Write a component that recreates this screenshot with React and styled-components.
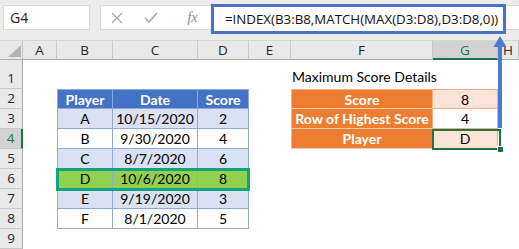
import React from "react";
import styled, { createGlobalStyle, css } from "styled-components";

const Global = createGlobalStyle`
  html, body { margin: 0; padding: 0; background: #fff; }
  body { width: 519px; height: 249px; overflow: hidden; }
  * { box-sizing: border-box; }
`;

const FONT = `"Lato", "Open Sans", "Liberation Sans", sans-serif`;

const Root = styled.div`
  position: relative;
  width: 519px;
  height: 249px;
  overflow: hidden;
  font-family: ${FONT};
`;

const Toolbar = styled.div`
  height: 40px;
  background: #ececec;
  display: flex;
  align-items: flex-start;
  padding: 5px 0 0 3px;
`;

const NameBox = styled.div`
  width: 87px;
  height: 25px;
  background: #fff;
  border: 1px solid #d6d6d6;
  font-family: "Open Sans", "Liberation Sans", sans-serif;
  font-size: 14px;
  color: #222;
  display: flex;
  align-items: center;
  padding-left: 6px;
`;

const FuncBox = styled.div`
  margin-left: 10px;
  width: 108px;
  height: 25px;
  background: #fff;
  border: 1px solid #d6d6d6;
  border-right: none;
  display: flex;
  align-items: center;
  justify-content: space-around;
  color: #a8a8a8;
`;

const Fx = styled.span`
  font-family: "Liberation Serif", serif;
  font-style: italic;
  font-size: 14px;
  color: #888;
  margin-left: 8px;
`;

const FormulaWrap = styled.div`
  flex: 1;
  height: 25px;
  background: #fff;
  border-top: 1px solid #d6d6d6;
  border-bottom: 1px solid #d6d6d6;
  position: relative;
`;

const FormulaBox = styled.div`
  position: absolute;
  left: 3px;
  top: -2px;
  width: 295px;
  height: 30px;
  border: 3px solid #4874c6;
  background: #fff;
  font-family: "Open Sans", "Liberation Sans", sans-serif;
  font-size: 13.3px;
  color: #111;
  display: flex;
  align-items: center;
  padding-left: 11px;
  white-space: nowrap;
`;

const Sheet = styled.div`
  position: relative;
  display: grid;
  grid-template-columns: 23px 34px 56px 85px 51px 42px 142px 65px 21px;
  grid-template-rows: 20px 29px repeat(8, 20px);
  background: #fff;
`;

const Corner = styled.div`
  background: #e9e9e9;
  border-right: 1px solid #c4c4c4;
  border-bottom: 1px solid #ababab;
  border-top: 1px solid #d6d6d6;
  position: relative;
  &::after {
    content: "";
    position: absolute;
    right: 1px;
    bottom: 2px;
    width: 0;
    height: 0;
    border-left: 13px solid transparent;
    border-bottom: 12px solid #b3b3b3;
  }
`;

const ColHead = styled.div`
  background: ${(p) => (p.$sel ? "#d2d2d2" : "#e9e9e9")};
  border-top: 1px solid #d6d6d6;
  border-right: 1px solid #c8c8c8;
  border-bottom: ${(p) => (p.$sel ? "2px solid #217346" : "1px solid #ababab")};
  color: ${(p) => (p.$sel ? "#217346" : "#262626")};
  font-family: "Open Sans", "Liberation Sans", sans-serif;
  font-size: 13.5px;
  display: flex;
  align-items: center;
  justify-content: center;
  padding-top: ${(p) => (p.$sel ? "1px" : "0")};
`;

const RowHead = styled.div`
  background: ${(p) => (p.$sel ? "#d2d2d2" : "#e9e9e9")};
  border-bottom: 1px solid #c8c8c8;
  border-right: ${(p) => (p.$sel ? "2px solid #217346" : "1px solid #ababab")};
  color: ${(p) => (p.$sel ? "#217346" : "#262626")};
  font-family: "Open Sans", "Liberation Sans", sans-serif;
  font-size: 13.5px;
  display: flex;
  align-items: flex-end;
  justify-content: center;
  line-height: 19px;
`;

const variants = {
  blank: css`
    background: transparent;
  `,
  title: css`
    background: transparent;
    overflow: visible;
    white-space: nowrap;
    justify-content: flex-start;
    align-items: flex-end;
    padding-left: 1px;
    padding-bottom: 4px;
    color: #000;
    position: relative;
    z-index: 1;
  `,
  t1head: css`
    background: #4472c4;
    color: #fff;
    font-weight: 700;
    border-right: 1px solid #8eaadb;
    border-bottom: 1px solid #8eaadb;
  `,
  t1blue: css`
    background: #d9e1f2;
    border-right: 1px solid #8eaadb;
    border-bottom: 1px solid #8eaadb;
  `,
  t1white: css`
    background: #fff;
    border-right: 1px solid #8eaadb;
    border-bottom: 1px solid #8eaadb;
  `,
  t1green: css`
    background: #92d050;
    border-right: 1px solid #8eaadb;
    border-bottom: 1px solid #8eaadb;
  `,
  t2label: css`
    background: #ed7d31;
    color: #fff;
    font-weight: 700;
    border-right: 1px solid #f4b084;
    border-bottom: 1px solid #f8cbad;
  `,
  t2peach: css`
    background: #fce4d6;
    border-right: 1px solid #f4b084;
    border-bottom: 1px solid #f4b084;
  `,
  t2white: css`
    background: #fff;
    border-right: 1px solid #f4b084;
    border-bottom: 1px solid #f4b084;
  `,
};

const Cell = styled.div`
  font-size: 14px;
  color: #000;
  display: flex;
  align-items: center;
  justify-content: center;
  white-space: nowrap;
  ${(p) => variants[p.$v || "blank"]}
  ${(p) => p.$left && css`border-left: 1px solid ${p.$left};`}
  ${(p) => p.$top && css`border-top: 1px solid ${p.$top};`}
`;

const RowSelect = styled.div`
  position: absolute;
  left: 56px;
  top: 128px;
  width: 194px;
  height: 23px;
  border: 3px solid #12a37e;
  pointer-events: none;
`;

const CellSelect = styled.div`
  position: absolute;
  left: 432px;
  top: 89px;
  width: 69px;
  height: 21px;
  border: 2px solid #217346;
  pointer-events: none;
`;

const FillHandle = styled.div`
  position: absolute;
  left: 497px;
  top: 106px;
  width: 7px;
  height: 7px;
  background: #217346;
  border: 1px solid #fff;
`;

const Arrow = styled.svg`
  position: absolute;
  left: 492px;
  top: 34px;
  overflow: visible;
  z-index: 2;
`;

const cols = ["A", "B", "C", "D", "E", "F", "G", "H"];

const t1 = [
  ["Player", "Date", "Score"],
  ["A", "10/15/2020", "2"],
  ["B", "9/30/2020", "4"],
  ["C", "8/7/2020", "6"],
  ["D", "10/6/2020", "8"],
  ["E", "9/19/2020", "3"],
  ["F", "8/1/2020", "5"],
];

const t2 = [
  ["Score", "8", "t2peach"],
  ["Row of Highest Score", "4", "t2white"],
  ["Player", "D", "t2peach"],
];

function rowCells(r) {
  const cells = [];
  for (let c = 0; c < 8; c++) {
    const key = `${r}-${c}`;
    if (c >= 1 && c <= 3 && r >= 2 && r <= 8) {
      const i = r - 2;
      const v =
        i === 0 ? "t1head" : r === 6 ? "t1green" : i % 2 === 1 ? "t1blue" : "t1white";
      cells.push(
        <Cell
          key={key}
          $v={v}
          $left={c === 1 ? "#8eaadb" : undefined}
          $top={r === 2 ? "#8eaadb" : undefined}
        >
          {t1[i][c - 1]}
        </Cell>
      );
      continue;
    }
    if (r === 1 && c === 5) {
      cells.push(
        <Cell key={key} $v="title">
          Maximum Score Details
        </Cell>
      );
      continue;
    }
    if (r >= 2 && r <= 4 && (c === 5 || c === 6)) {
      const row = t2[r - 2];
      cells.push(
        <Cell
          key={key}
          $v={c === 5 ? "t2label" : row[2]}
          $left={c === 5 ? "#f4b084" : undefined}
          $top={r === 2 ? "#f4b084" : undefined}
        >
          {c === 5 ? row[0] : row[1]}
        </Cell>
      );
      continue;
    }
    cells.push(<Cell key={key} />);
  }
  return cells;
}

export default function App() {
  return (
    <Root>
      <Global />
      <Toolbar>
        <NameBox>G4</NameBox>
        <FuncBox>
          <svg width="12" height="12" viewBox="0 0 12 12">
            <path d="M1 1 L11 11 M11 1 L1 11" stroke="#a9a9a9" strokeWidth="1.3" />
          </svg>
          <svg width="14" height="12" viewBox="0 0 14 12">
            <path d="M1 6 L5 10 L13 1" stroke="#a9a9a9" strokeWidth="1.6" fill="none" />
          </svg>
          <Fx>fx</Fx>
        </FuncBox>
        <FormulaWrap>
          <FormulaBox>=INDEX(B3:B8,MATCH(MAX(D3:D8),D3:D8,0))</FormulaBox>
        </FormulaWrap>
      </Toolbar>
      <Sheet>
        <Corner />
        {cols.map((c) => (
          <ColHead key={c} $sel={c === "G"}>
            {c}
          </ColHead>
        ))}
        {[1, 2, 3, 4, 5, 6, 7, 8, 9].map((r) => (
          <React.Fragment key={r}>
            <RowHead $sel={r === 4}>{r}</RowHead>
            {rowCells(r)}
          </React.Fragment>
        ))}
        <RowSelect />
        <CellSelect />
        <FillHandle />
      </Sheet>
      <Arrow width="16" height="96" viewBox="0 0 16 96">
        <polygon points="8,2 1.5,13 14.5,13" fill="#4a7bd0" />
        <rect x="6" y="12" width="4" height="82" fill="#4a7bd0" />
      </Arrow>
    </Root>
  );
}
